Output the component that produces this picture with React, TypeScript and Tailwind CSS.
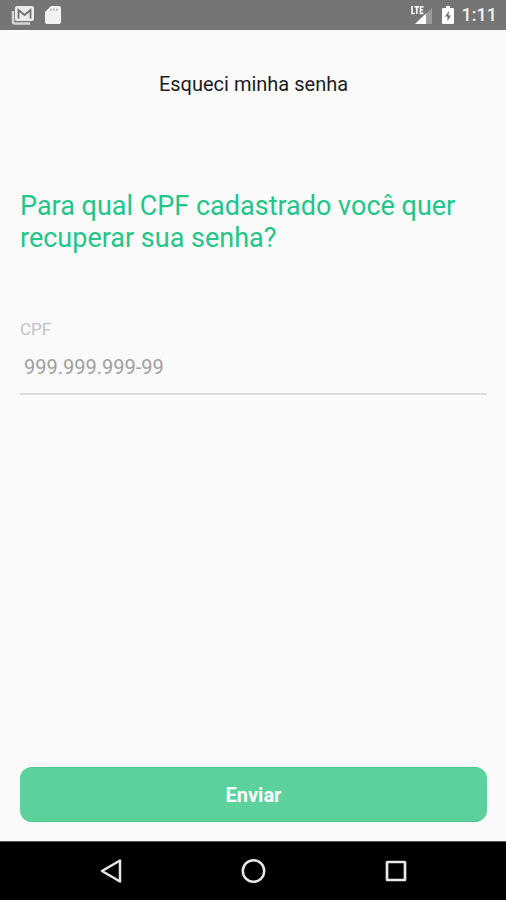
import { useState } from "react";

function MailIcon() {
  return (
    <svg width="24" height="20" viewBox="0 0 24 20" aria-hidden="true">
      <path d="M2 6v10.500a2 2 0 0 0 2 2h15" fill="none" stroke="#d6d6d6" strokeWidth="2.400" />
      <rect x="4" y="1" width="19" height="15" rx="2" fill="#ebebeb" />
      <path d="M7.500 13.500V5l6 5 6-5v8.500" fill="none" stroke="#6f6f6f" strokeWidth="1.800" />
    </svg>
  );
}

function SdCardIcon() {
  return (
    <svg width="16" height="20" viewBox="0 0 16 20" aria-hidden="true">
      <path d="M6 1h8a2 2 0 0 1 2 2v14a2 2 0 0 1-2 2H2a2 2 0 0 1-2-2V7z" fill="#f2f2f2" />
      <path d="M6 3.500v2.500M9 3.500v2.500M12 3.500v2.500" stroke="#aaa" strokeWidth="1.300" />
    </svg>
  );
}

function SignalIcon() {
  return (
    <svg width="24" height="20" viewBox="0 0 24 20" role="img" aria-label="LTE">
      <path d="M5 19 22 3v16z" fill="#9c9c9c" />
      <path d="M5 19 16 8.500V19z" fill="#fff" />
      <path
        d="M2 1v7.500h3M4.500 1.800h4.500M6.800 2v7M13.500 1.800h-3v6.500h3M10.500 5h2.700"
        fill="none"
        stroke="#f4f4f4"
        strokeWidth="1.700"
      />
    </svg>
  );
}

function BatteryIcon() {
  return (
    <svg width="12" height="20" viewBox="0 0 12 20" aria-hidden="true">
      <path d="M4 1h4v2h3a1 1 0 0 1 1 1v14a1 1 0 0 1-1 1H1a1 1 0 0 1-1-1V4a1 1 0 0 1 1-1h3z" fill="#fff" />
      <path d="M7 6 3 11.500h2.500V16L9 10.500H6.500z" fill="#6d6d6d" />
    </svg>
  );
}

function StatusBar() {
  return (
    <header className="flex h-[30px] items-center justify-between bg-[#757575] pr-[9px] pl-[11px]">
      <div className="flex items-center gap-[10px]">
        <MailIcon />
        <SdCardIcon />
      </div>
      <div className="flex items-center gap-2">
        <SignalIcon />
        <BatteryIcon />
        <time className="text-lg leading-5 font-medium text-[#f2f2f2]">1:11</time>
      </div>
    </header>
  );
}

function NavBar() {
  return (
    <nav className="grid h-[59px] grid-cols-[1fr_142px_142px_142px_1fr] items-center border-t border-[#555] bg-black">
      <button type="button" aria-label="Voltar" className="col-start-2 flex justify-center">
        <svg width="26" height="26" viewBox="0 0 26 26">
          <path d="M22 2.500v21L4 13z" fill="none" stroke="#e8e8e8" strokeWidth="2.500" strokeLinejoin="round" />
        </svg>
      </button>
      <button type="button" aria-label="Início" className="flex justify-center">
        <svg width="26" height="26" viewBox="0 0 26 26">
          <circle cx="13.500" cy="13" r="10.700" fill="none" stroke="#e8e8e8" strokeWidth="2.500" />
        </svg>
      </button>
      <button type="button" aria-label="Recentes" className="flex justify-center">
        <svg width="26" height="26" viewBox="0 0 26 26">
          <rect x="5" y="4" width="18" height="18" rx="0.500" fill="none" stroke="#e8e8e8" strokeWidth="2.700" />
        </svg>
      </button>
    </nav>
  );
}

export default function App() {
  const [cpf, setCpf] = useState("");

  return (
    <div className="flex min-h-screen flex-col bg-[#fafafa] font-['Roboto',sans-serif]">
      <StatusBar />
      <form className="flex flex-1 flex-col pr-[19px] pb-[19px] pl-5" onSubmit={(event) => event.preventDefault()}>
        <h1 className="mt-10 text-center text-xl leading-7 text-[#1c1c1c]">Esqueci minha senha</h1>
        <h2 className="mt-[92px] text-[27px] leading-8 text-[#23c588]">
          Para qual CPF cadastrado você quer recuperar sua senha?
        </h2>
        <label htmlFor="cpf" className="mt-[63px] text-[17px] leading-6 text-[#bfc0c8]">
          CPF
        </label>
        <input
          id="cpf"
          type="text"
          inputMode="numeric"
          placeholder="999.999.999-99"
          value={cpf}
          onChange={(event) => setCpf(event.target.value)}
          className="h-[54px] w-full border-b-2 border-[#dcdcdc] bg-transparent px-1 text-xl text-[#333] outline-none placeholder:text-[#a0a0a0]"
        />
        <button
          type="submit"
          className="mt-auto h-[55px] w-full rounded-xl border-y border-[#4bc78f] bg-[#5bd29c] text-xl font-bold text-white"
        >
          Enviar
        </button>
      </form>
      <NavBar />
    </div>
  );
}
